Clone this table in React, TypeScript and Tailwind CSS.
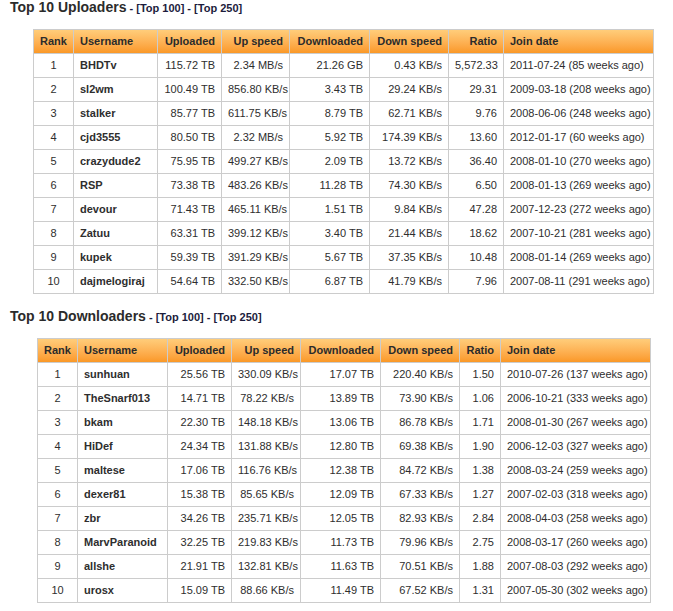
type Row = [string, string, string, string, string, string, string, string];

const uploaders: Row[] = [
  ["1", "BHDTv", "115.72 TB", "2.34 MB/s", "21.26 GB", "0.43 KB/s", "5,572.33", "2011-07-24 (85 weeks ago)"],
  ["2", "sl2wm", "100.49 TB", "856.80 KB/s", "3.43 TB", "29.24 KB/s", "29.31", "2009-03-18 (208 weeks ago)"],
  ["3", "stalker", "85.77 TB", "611.75 KB/s", "8.79 TB", "62.71 KB/s", "9.76", "2008-06-06 (248 weeks ago)"],
  ["4", "cjd3555", "80.50 TB", "2.32 MB/s", "5.92 TB", "174.39 KB/s", "13.60", "2012-01-17 (60 weeks ago)"],
  ["5", "crazydude2", "75.95 TB", "499.27 KB/s", "2.09 TB", "13.72 KB/s", "36.40", "2008-01-10 (270 weeks ago)"],
  ["6", "RSP", "73.38 TB", "483.26 KB/s", "11.28 TB", "74.30 KB/s", "6.50", "2008-01-13 (269 weeks ago)"],
  ["7", "devour", "71.43 TB", "465.11 KB/s", "1.51 TB", "9.84 KB/s", "47.28", "2007-12-23 (272 weeks ago)"],
  ["8", "Zatuu", "63.31 TB", "399.12 KB/s", "3.40 TB", "21.44 KB/s", "18.62", "2007-10-21 (281 weeks ago)"],
  ["9", "kupek", "59.39 TB", "391.29 KB/s", "5.67 TB", "37.35 KB/s", "10.48", "2008-01-14 (269 weeks ago)"],
  ["10", "dajmelogiraj", "54.64 TB", "332.50 KB/s", "6.87 TB", "41.79 KB/s", "7.96", "2007-08-11 (291 weeks ago)"],
];

const downloaders: Row[] = [
  ["1", "sunhuan", "25.56 TB", "330.09 KB/s", "17.07 TB", "220.40 KB/s", "1.50", "2010-07-26 (137 weeks ago)"],
  ["2", "TheSnarf013", "14.71 TB", "78.22 KB/s", "13.89 TB", "73.90 KB/s", "1.06", "2006-10-21 (333 weeks ago)"],
  ["3", "bkam", "22.30 TB", "148.18 KB/s", "13.06 TB", "86.78 KB/s", "1.71", "2008-01-30 (267 weeks ago)"],
  ["4", "HiDef", "24.34 TB", "131.88 KB/s", "12.80 TB", "69.38 KB/s", "1.90", "2006-12-03 (327 weeks ago)"],
  ["5", "maltese", "17.06 TB", "116.76 KB/s", "12.38 TB", "84.72 KB/s", "1.38", "2008-03-24 (259 weeks ago)"],
  ["6", "dexer81", "15.38 TB", "85.65 KB/s", "12.09 TB", "67.33 KB/s", "1.27", "2007-02-03 (318 weeks ago)"],
  ["7", "zbr", "34.26 TB", "235.71 KB/s", "12.05 TB", "82.93 KB/s", "2.84", "2008-04-03 (258 weeks ago)"],
  ["8", "MarvParanoid", "32.25 TB", "219.83 KB/s", "11.73 TB", "79.96 KB/s", "2.75", "2008-03-17 (260 weeks ago)"],
  ["9", "allshe", "21.91 TB", "132.81 KB/s", "11.63 TB", "70.51 KB/s", "1.88", "2007-08-03 (292 weeks ago)"],
  ["10", "urosx", "15.09 TB", "88.66 KB/s", "11.49 TB", "67.52 KB/s", "1.31", "2007-05-30 (302 weeks ago)"],
];

const headers = ["Rank", "Username", "Uploaded", "Up speed", "Downloaded", "Down speed", "Ratio", "Join date"];
const align = ["text-center", "text-left", "text-right", "text-right", "text-right", "text-right", "text-right", "text-left"];

function Title({ text }: { text: string }) {
  return (
    <div className="h-[14px] pl-[10px] leading-[14px] text-[#2b2b2b]">
      <span className="text-[14px] font-bold">{text}</span>
      <span className="text-[11px] font-bold text-[#1c1c3c]">
        {" "}- <a href="#">[Top 100]</a> - <a href="#">[Top 250]</a>
      </span>
    </div>
  );
}

function StatsTable({ rows, widths, className }: { rows: Row[]; widths: number[]; className: string }) {
  return (
    <table className={`table-fixed border-collapse text-[11px] text-[#2e2e2e] ${className}`}>
      <colgroup>
        {widths.map((w, i) => (
          <col key={i} style={{ width: w }} />
        ))}
      </colgroup>
      <thead>
        <tr className="h-[24px] bg-gradient-to-b from-[#ffcd7a] to-[#fa961f]">
          {headers.map((h, i) => (
            <th key={h} className={`border border-[#cccccc] px-[6px] font-bold text-[#2b2b2b] ${align[i]}`}>
              {h}
            </th>
          ))}
        </tr>
      </thead>
      <tbody>
        {rows.map((r) => (
          <tr key={r[0]} className="h-[24px] bg-white">
            {r.map((c, i) => (
              <td
                key={i}
                className={`whitespace-nowrap border border-[#cccccc] px-[6px] ${align[i]} ${i === 1 ? "font-bold" : ""}`}
              >
                {c}
              </td>
            ))}
          </tr>
        ))}
      </tbody>
    </table>
  );
}

export default function App() {
  return (
    <div className="min-h-[611px] w-[673px] bg-white font-['Liberation_Sans',Arial,sans-serif]">
      <Title text="Top 10 Uploaders" />
      <StatsTable
        rows={uploaders}
        widths={[40, 84, 64, 68, 80, 79, 55, 150]}
        className="ml-[33px] mt-[15px] w-[620px]"
      />
      <div className="pt-[15px]">
        <Title text="Top 10 Downloaders" />
      </div>
      <StatsTable
        rows={downloaders}
        widths={[40, 90, 64, 69, 80, 79, 41, 150]}
        className="ml-[37px] mt-[15px] w-[613px]"
      />
    </div>
  );
}
